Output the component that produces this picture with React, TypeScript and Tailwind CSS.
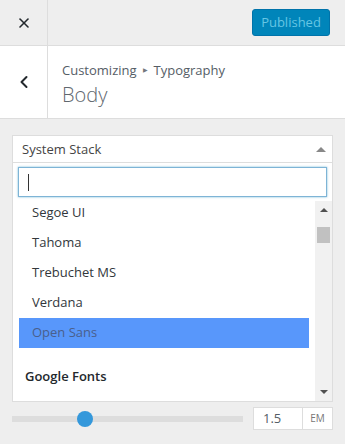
import { X, ChevronLeft } from 'lucide-react';

const fonts = ['Segoe UI', 'Tahoma', 'Trebuchet MS', 'Verdana'];

export default function App() {
  return (
    <div className="w-[345px] h-[444px] overflow-hidden bg-[#eeeeee] text-[13px] text-[#555d66] font-['Open_Sans',sans-serif]">
      {/* top bar */}
      <div className="flex h-[46px] border-b border-[#dddddd]">
        <div className="w-[48px] flex items-center justify-center border-r border-[#dddddd] text-[#23282d]">
          <X className="w-[16px] h-[16px]" strokeWidth={2.4} />
        </div>
        <div className="flex-1 flex items-center justify-end pr-[15px] pb-[1px]">
          <button className="h-[27px] w-[78px] rounded-[3px] bg-[#0085ba] border border-[#0073aa] text-[#66c6e4] text-[13px] leading-none">
            Published
          </button>
        </div>
      </div>

      {/* section header */}
      <div className="flex h-[73px] bg-white border-b border-[#dddddd]">
        <div className="w-[48px] flex items-center justify-center border-r border-[#dddddd] text-[#23282d]">
          <ChevronLeft className="w-[20px] h-[20px]" strokeWidth={2.4} />
        </div>
        <div className="pl-[14px] pt-[14px]">
          <div className="flex items-center gap-[6px] leading-[20px]">
            <span>Customizing</span>
            <span className="text-[6px] text-[#72777c]">&#9654;</span>
            <span>Typography</span>
          </div>
          <div className="text-[20px] font-light leading-[28px] mt-[1px] text-[#60676e]">Body</div>
        </div>
      </div>

      {/* control */}
      <div className="px-[12px] pt-[16px]">
        <div className="bg-white border border-[#dddddd]">
          <div className="h-[27px] flex items-center justify-between pl-[9px] pr-[6px] border-b border-[#dddddd] text-[#444]">
            <span className="pt-[2px]">System Stack</span>
            <span className="w-0 h-0 border-l-[5px] border-r-[5px] border-b-[5px] border-l-transparent border-r-transparent border-b-[#888]" />
          </div>
          <div className="px-[5px] pt-[4px] pb-[1px]">
            <div className="h-[30px] border border-[#7eb4d6] shadow-[0_0_2px_rgba(30,140,190,0.6)] flex items-center pl-[9px]">
              <span className="w-[1px] h-[17px] bg-[#333]" />
            </div>
          </div>
          <div className="flex h-[203px]">
            <div className="flex-1 overflow-hidden px-[6px]">
              {fonts.map(f => (
                <div key={f} className="h-[30px] flex items-center pl-[13px] text-[#32373c]">{f}</div>
              ))}
              <div className="h-[30px] flex items-center pl-[13px] bg-[#5897fb] text-[#4a5f8c]">Open Sans</div>
              <div className="h-[55px] flex items-center pl-[6px] pt-[2px] font-semibold text-[#23282d]">Google Fonts</div>
              <div className="h-[30px] flex items-center pl-[13px] text-[#32373c]">ABeeZee</div>
            </div>
            <div className="w-[17px] mt-[3px] bg-[#f1f1f1] flex flex-col items-center">
              <span className="mt-[7px] w-0 h-0 border-l-[4px] border-r-[4px] border-b-[4px] border-l-transparent border-r-transparent border-b-[#505050]" />
              <span className="mt-[15px] w-[13px] h-[16px] bg-[#c1c1c1]" />
              <span className="mt-auto mb-[7px] w-0 h-0 border-l-[4px] border-r-[4px] border-t-[4px] border-l-transparent border-r-transparent border-t-[#505050]" />
            </div>
          </div>
        </div>

        <div className="flex items-center mt-[5px] h-[23px]">
          <div className="relative w-[231px] h-[6px] bg-[#dddddd]">
            <div className="absolute left-[65px] top-[-5px] w-[16px] h-[16px] rounded-full bg-[#3498db]" />
          </div>
          <div className="ml-auto flex h-[23px] w-[80px] border border-[#dddddd] bg-white">
            <div className="flex-1 flex items-center pl-[9px] text-[#555d66]">1.5</div>
            <div className="w-[30px] flex items-center justify-center border-l border-[#dddddd] text-[10px] text-[#777]">EM</div>
          </div>
        </div>
      </div>
    </div>
  );
}
